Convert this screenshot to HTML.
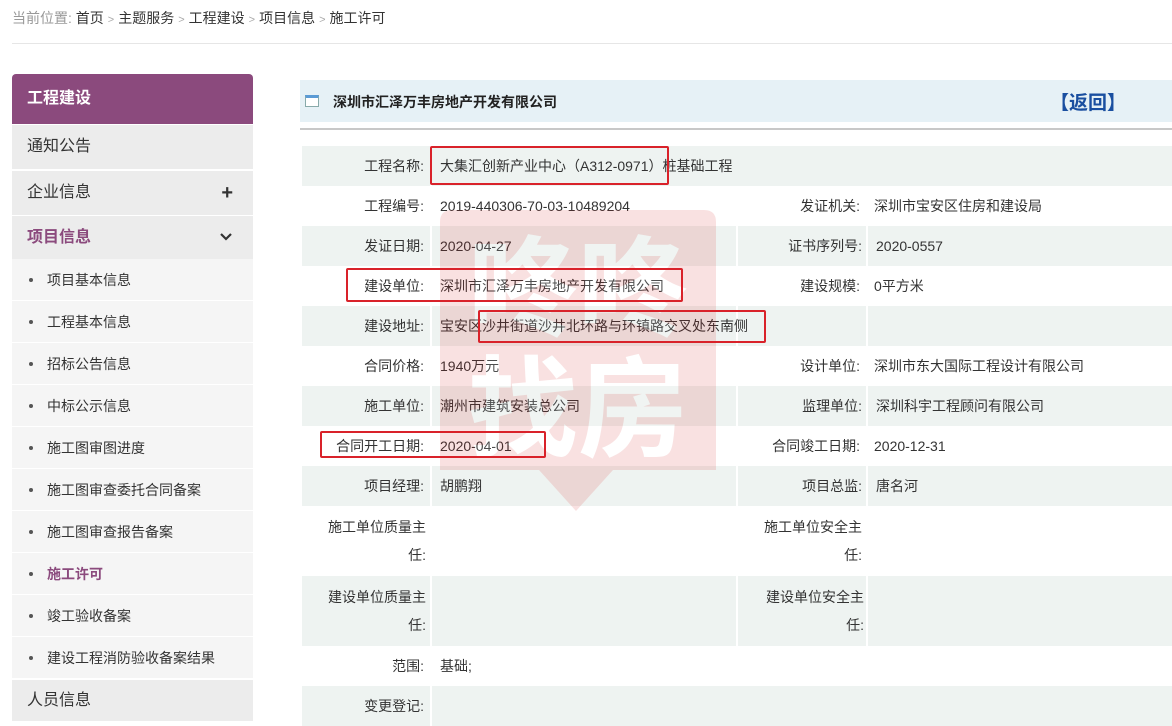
<!DOCTYPE html>
<html><head><meta charset="utf-8"><style>
*{margin:0;padding:0;box-sizing:border-box}
body{width:1172px;height:721px;overflow:hidden;background:#fff;font-family:"Liberation Sans","Noto Sans CJK SC",sans-serif;color:#333;position:relative}
.abs{position:absolute}
.crumb{left:12px;top:8px;font-size:14px;color:#999}
.crumb b{font-weight:normal;color:#333}
.crumb i{font-style:normal;font-size:11px;color:#aaa;margin:0 4px}
.hr{left:12px;top:43px;width:1160px;height:1px;background:#e6e6e6}
.side{left:12px;width:241px}
.sh{top:74px;height:50px;background:#8b4a7d;color:#fff;font-weight:bold;font-size:16px;line-height:50px;padding-left:15px;border-radius:4px 4px 0 0}
.si{height:44px;background:#ececec;font-size:16px;line-height:44px;padding-left:15px}
.sub{height:42px;background:#f5f5f5;font-size:14px;line-height:42px;padding-left:35px;position:absolute;left:12px;width:241px;border-bottom:1px solid #fff}
.sub:before{content:"";position:absolute;left:17px;top:19px;width:4px;height:4px;border-radius:50%;background:#555}
.row{position:absolute;left:302px;width:870px}
.sh1{background:#eef3f1}
.c{position:absolute;top:0;height:100%;font-size:14px;line-height:40px;white-space:nowrap}
.l{width:128px;text-align:right;padding-right:6px}
.w{white-space:normal;line-height:28px;padding-top:7px;padding-left:24px;padding-right:4px}
.sh1 .v1,.sh1 .l2{border-left:2px solid #fff}
.red{position:absolute;border:2px solid #d9222a;border-radius:2px}
</style></head><body>
<div class="abs crumb">当前位置: <b>首页</b><i>&gt;</i><b>主题服务</b><i>&gt;</i><b>工程建设</b><i>&gt;</i><b>项目信息</b><i>&gt;</i><b>施工许可</b></div>
<div class="abs hr"></div>

<div class="abs side sh">工程建设</div>
<div class="abs side si" style="top:125px">通知公告</div>
<div class="abs side si" style="top:171px">企业信息<span style="position:absolute;right:20px;font-size:20px;font-weight:bold">+</span></div>
<div class="abs side si" style="top:216px;color:#8b4a7d;font-weight:bold">项目信息</div>
<svg class="abs" style="left:220px;top:233px" width="12" height="8"><path d="M1 1L6 6L11 1" stroke="#333" stroke-width="2.2" fill="none"/></svg>
<div class="sub" style="top:259px">项目基本信息</div>
<div class="sub" style="top:301px">工程基本信息</div>
<div class="sub" style="top:343px">招标公告信息</div>
<div class="sub" style="top:385px">中标公示信息</div>
<div class="sub" style="top:427px">施工图审图进度</div>
<div class="sub" style="top:469px">施工图审查委托合同备案</div>
<div class="sub" style="top:511px">施工图审查报告备案</div>
<div class="sub" style="top:553px;color:#8b4a7d;font-weight:bold">施工许可</div>
<div class="sub" style="top:595px">竣工验收备案</div>
<div class="sub" style="top:637px">建设工程消防验收备案结果</div>
<div class="abs side si" style="top:680px;height:41px;line-height:41px">人员信息</div>

<div class="abs" style="left:300px;top:80px;width:872px;height:42px;background:#e6f1f6"></div>
<div class="abs" style="left:305px;top:95px;width:14px;height:12px;border:1px solid #8aa;background:#fff;border-top:3px solid #5b9bd5"></div>
<div class="abs" style="left:333px;top:92px;font-size:14px;font-weight:bold;color:#222">深圳市汇泽万丰房地产开发有限公司</div>
<div class="abs" style="left:1050px;top:88px;font-size:19px;font-weight:bold;color:#1a4fa0">【返回】</div>
<div class="abs" style="left:300px;top:128px;width:872px;height:2px;background:#c8c8c8"></div>

<div class="row sh1" style="top:146px;height:40px"><div class="c l">工程名称:</div><div class="c v1" style="left:128px;padding-left:8px;width:742px">大集汇创新产业中心（A312-0971）桩基础工程</div></div>
<div class="row" style="top:186px;height:40px"><div class="c l">工程编号:</div><div class="c" style="left:138px">2019-440306-70-03-10489204</div><div class="c l" style="left:436px">发证机关:</div><div class="c" style="left:572px">深圳市宝安区住房和建设局</div></div>
<div class="row sh1" style="top:226px;height:40px"><div class="c l">发证日期:</div><div class="c v1" style="left:128px;padding-left:8px;width:306px">2020-04-27</div><div class="c l l2" style="left:434px;width:132px">证书序列号:</div><div class="c v1" style="left:564px;padding-left:8px;width:306px">2020-0557</div></div>
<div class="row" style="top:266px;height:40px"><div class="c l">建设单位:</div><div class="c" style="left:138px">深圳市汇泽万丰房地产开发有限公司</div><div class="c l" style="left:436px">建设规模:</div><div class="c" style="left:572px">0平方米</div></div>
<div class="row sh1" style="top:306px;height:40px"><div class="c l">建设地址:</div><div class="c l2" style="left:434px;width:132px"></div><div class="c v1" style="left:564px;width:306px"></div><div class="c v1" style="left:128px;padding-left:8px;width:306px;overflow:visible">宝安区沙井街道沙井北环路与环镇路交叉处东南侧</div></div>
<div class="row" style="top:346px;height:40px"><div class="c l">合同价格:</div><div class="c" style="left:138px">1940万元</div><div class="c l" style="left:436px">设计单位:</div><div class="c" style="left:572px">深圳市东大国际工程设计有限公司</div></div>
<div class="row sh1" style="top:386px;height:40px"><div class="c l">施工单位:</div><div class="c v1" style="left:128px;padding-left:8px;width:306px">潮州市建筑安装总公司</div><div class="c l l2" style="left:434px;width:132px">监理单位:</div><div class="c v1" style="left:564px;padding-left:8px;width:306px">深圳科宇工程顾问有限公司</div></div>
<div class="row" style="top:426px;height:40px"><div class="c l">合同开工日期:</div><div class="c" style="left:138px">2020-04-01</div><div class="c l" style="left:436px">合同竣工日期:</div><div class="c" style="left:572px">2020-12-31</div></div>
<div class="row sh1" style="top:466px;height:40px"><div class="c l">项目经理:</div><div class="c v1" style="left:128px;padding-left:8px;width:306px">胡鹏翔</div><div class="c l l2" style="left:434px;width:132px">项目总监:</div><div class="c v1" style="left:564px;padding-left:8px;width:306px">唐名河</div></div>
<div class="row" style="top:506px;height:70px"><div class="c l w">施工单位质量主任:</div><div class="c l w" style="left:436px">施工单位安全主任:</div></div>
<div class="row sh1" style="top:576px;height:70px"><div class="c l w">建设单位质量主任:</div><div class="c v1" style="left:128px;width:306px"></div><div class="c l l2 w" style="left:434px;width:132px;padding-left:26px">建设单位安全主任:</div><div class="c v1" style="left:564px;width:306px"></div></div>
<div class="row" style="top:646px;height:40px"><div class="c l">范围:</div><div class="c" style="left:138px">基础;</div></div>
<div class="row sh1" style="top:686px;height:40px"><div class="c l">变更登记:</div><div class="c v1" style="left:128px;width:742px"></div></div>

<svg class="abs" style="left:438px;top:208px;opacity:.13;pointer-events:none" width="280" height="305"><path d="M14 2H266Q278 2 278 14V262H175L138 303L101 262H2V14Q2 2 14 2Z" fill="#d81e1e"/><text x="140" y="120" text-anchor="middle" font-size="110" font-weight="bold" fill="#fff" font-family="Noto Sans CJK SC">咚咚</text><text x="140" y="240" text-anchor="middle" font-size="110" font-weight="bold" fill="#fff" font-family="Noto Sans CJK SC">找房</text></svg>

<div class="red" style="left:430px;top:146px;width:239px;height:39px"></div>
<div class="red" style="left:346px;top:268px;width:337px;height:34px"></div>
<div class="red" style="left:478px;top:310px;width:288px;height:33px"></div>
<div class="red" style="left:320px;top:431px;width:226px;height:27px"></div>
</body></html>
